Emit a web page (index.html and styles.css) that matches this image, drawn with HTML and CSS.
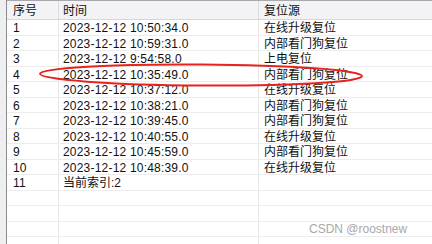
FILE: index.html
```html
<!DOCTYPE html>
<html>
<head>
<meta charset="utf-8">
<link rel="stylesheet" href="styles.css">
</head>
<body>
<div class="frame">
  <div class="gutter"></div>
  <div class="table">
    <div class="row head">
      <div class="cell c1">序号</div>
      <div class="cell c2">时间</div>
      <div class="cell c3">复位源</div>
    </div>
    <div class="row"><div class="cell c1 num">1</div><div class="cell c2 num">2023-12-12 10:50:34.0</div><div class="cell c3">在线升级复位</div></div>
    <div class="row"><div class="cell c1 num">2</div><div class="cell c2 num">2023-12-12 10:59:31.0</div><div class="cell c3">内部看门狗复位</div></div>
    <div class="row"><div class="cell c1 num">3</div><div class="cell c2 num">2023-12-12 9:54:58.0</div><div class="cell c3">上电复位</div></div>
    <div class="row"><div class="cell c1 num">4</div><div class="cell c2 num">2023-12-12 10:35:49.0</div><div class="cell c3">内部看门狗复位</div></div>
    <div class="row"><div class="cell c1 num">5</div><div class="cell c2 num">2023-12-12 10:37:12.0</div><div class="cell c3">在线升级复位</div></div>
    <div class="row"><div class="cell c1 num">6</div><div class="cell c2 num">2023-12-12 10:38:21.0</div><div class="cell c3">内部看门狗复位</div></div>
    <div class="row"><div class="cell c1 num">7</div><div class="cell c2 num">2023-12-12 10:39:45.0</div><div class="cell c3">内部看门狗复位</div></div>
    <div class="row"><div class="cell c1 num">8</div><div class="cell c2 num">2023-12-12 10:40:55.0</div><div class="cell c3">在线升级复位</div></div>
    <div class="row"><div class="cell c1 num">9</div><div class="cell c2 num">2023-12-12 10:45:59.0</div><div class="cell c3">内部看门狗复位</div></div>
    <div class="row"><div class="cell c1 num">10</div><div class="cell c2 num">2023-12-12 10:48:39.0</div><div class="cell c3">在线升级复位</div></div>
    <div class="row"><div class="cell c1 num">11</div><div class="cell c2">当前索引:2</div><div class="cell c3"></div></div>
    <div class="row"><div class="cell c1"></div><div class="cell c2"></div><div class="cell c3"></div></div>
    <div class="row"><div class="cell c1"></div><div class="cell c2"></div><div class="cell c3"></div></div>
    <div class="row"><div class="cell c1"></div><div class="cell c2"></div><div class="cell c3"></div></div>
    <div class="row"><div class="cell c1"></div><div class="cell c2"></div><div class="cell c3"></div></div>
  </div>
  <svg class="mark" width="432" height="244" viewBox="0 0 432 244">
    <ellipse cx="201" cy="75" rx="161" ry="10.5" fill="none" stroke="#e8221d" stroke-width="2" transform="rotate(0.4 201 75)"/>
  </svg>
  <div class="watermark">CSDN @roostnew</div>
</div>
</body>
</html>
```
FILE: styles.css
```css
html, body {
  margin: 0;
  padding: 0;
  background: #ffffff;
}
.frame {
  position: relative;
  display: flex;
  width: 432px;
  height: 244px;
  overflow: hidden;
  font-family: "Liberation Sans", "Noto Sans CJK SC", sans-serif;
  font-size: 12px;
  color: #111;
}
.gutter {
  width: 6px;
  flex: none;
  background: #efefef;
  border-right: 1px solid #8c8c8c;
}
.table {
  flex: 1;
  display: flex;
  flex-direction: column;
}
.row {
  display: grid;
  grid-template-columns: 52px 200px 1fr;
  height: 15.5px;
  flex: none;
  box-sizing: border-box;
  border-bottom: 1px solid #ececec;
}
.row.head {
  height: 20px;
  background: #f3f3f5;
  border-top: 1px solid #a9a9ad;
  border-bottom: 1px solid #d6d6d8;
}
.cell {
  box-sizing: border-box;
  border-right: 1px solid #e6e6e6;
  padding-top: 1px;
  line-height: 15px;
  white-space: nowrap;
  overflow: hidden;
}
.head .cell {
  padding-top: 1px;
  line-height: 19px;
  border-right-color: #dcdcdc;
}
.c1 { padding-left: 6px; }
.c2 { padding-left: 4px; }
.c3 { padding-left: 5px; border-right: none; }
.num { letter-spacing: 0.2px; }
.mark {
  position: absolute;
  left: 0;
  top: 0;
  pointer-events: none;
}
.watermark {
  position: absolute;
  left: 309px;
  top: 222px;
  font-family: "Liberation Sans", sans-serif;
  font-size: 12px;
  color: #a8a8a8;
}
```
